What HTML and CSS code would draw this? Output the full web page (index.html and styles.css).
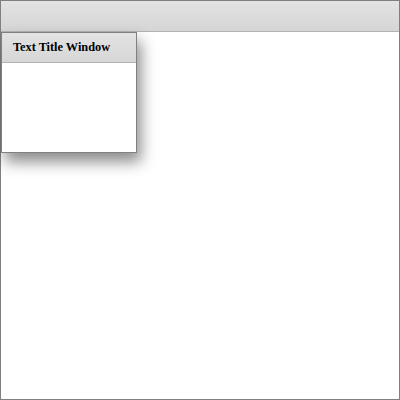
FILE: index.html
```html
<!DOCTYPE html>
<html>
<head>
<meta charset="utf-8">
<link rel="stylesheet" href="styles.css">
</head>
<body>
<div class="app">
  <div class="topbar"></div>
  <div class="canvas">
    <div class="window">
      <div class="window-header">Text Title Window</div>
      <div class="window-body"></div>
    </div>
  </div>
</div>
</body>
</html>
```
FILE: styles.css
```css
html, body {
  margin: 0;
  padding: 0;
  background: #fff;
}
.app {
  box-sizing: border-box;
  width: 400px;
  height: 400px;
  border: 1px solid #808080;
  display: flex;
  flex-direction: column;
}
.topbar {
  height: 30px;
  flex: none;
  background: linear-gradient(#e3e3e3, #d5d5d5);
  border-bottom: 1px solid #b3b3b3;
}
.canvas {
  flex: 1;
  position: relative;
}
.window {
  position: absolute;
  left: 0;
  top: 0;
  box-sizing: border-box;
  width: 136px;
  height: 121px;
  border: 1px solid #808080;
  background: #fff;
  box-shadow: 4px 9px 14px rgba(0, 0, 0, 0.45);
  display: flex;
  flex-direction: column;
}
.window-header {
  height: 29px;
  flex: none;
  border-bottom: 1px solid #b3b3b3;
  background: linear-gradient(#e3e3e3, #d6d6d6);
  font-family: "Liberation Serif", serif;
  font-weight: bold;
  font-size: 12.3px;
  line-height: 29px;
  padding-left: 11px;
  color: #000;
}
.window-body {
  flex: 1;
}
```
